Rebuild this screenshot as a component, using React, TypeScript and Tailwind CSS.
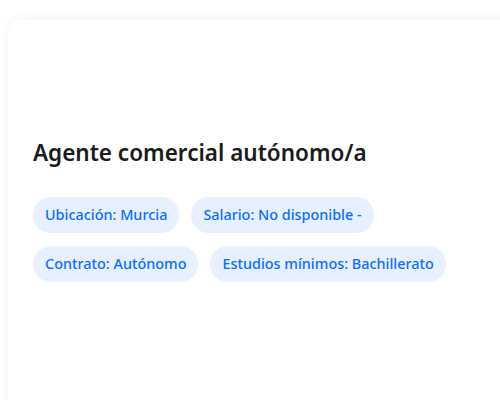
import React from "react";

const chips = [
  ["Ubicación: Murcia", "Salario: No disponible -"],
  ["Contrato: Autónomo", "Estudios mínimos: Bachillerato"],
];

export default function App() {
  return (
    <div className="w-[500px] h-[400px] overflow-hidden bg-white pl-2 pt-5" style={{ fontFamily: '"Noto Sans", "Open Sans", sans-serif' }}>
      <div className="w-[520px] h-[420px] rounded-xl bg-white shadow-[0_0_12px_rgba(0,0,0,0.06)] pl-[25px] pt-[118px]">
        <h1 className="text-[22.5px] leading-[30px] font-semibold text-[#1a1a1a]">Agente comercial autónomo/a</h1>
        <div className="mt-[29px] flex flex-col gap-[13px]">
          {chips.map((row, i) => (
            <div key={i} className="flex gap-3">
              {row.map((c) => (
                <span key={c} className="h-9 px-3 rounded-full bg-[#e6f0ff] text-[#0d6efd] text-[14.4px] font-medium flex items-center">
                  {c}
                </span>
              ))}
            </div>
          ))}
        </div>
      </div>
    </div>
  );
}
